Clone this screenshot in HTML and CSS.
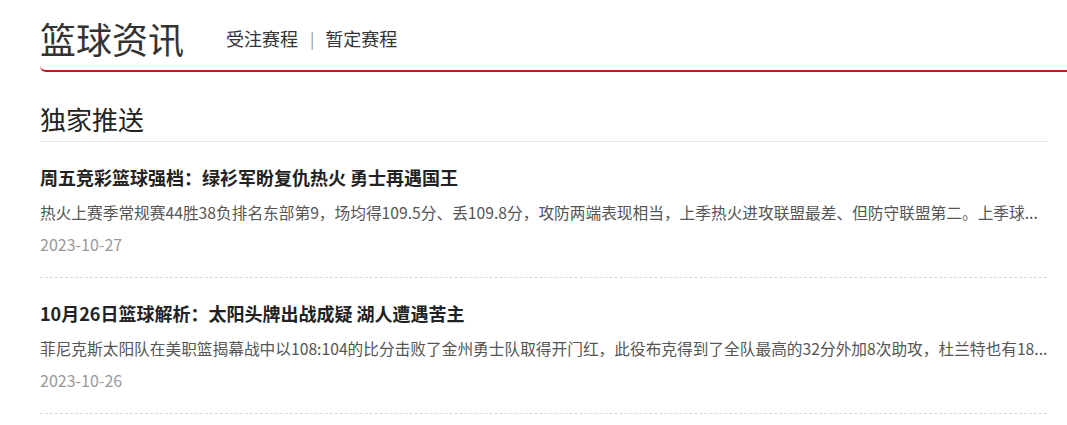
FILE: index.html
```html
<!DOCTYPE html>
<html lang="zh-CN">
<head>
<meta charset="utf-8">
<title>篮球资讯</title>
<link rel="stylesheet" href="styles.css">
</head>
<body>
<div class="page">
  <header class="top">
    <h1 class="brand">篮球资讯</h1>
    <nav class="nav">
      <a class="nav-link">受注赛程</a>
      <span class="sep">|</span>
      <a class="nav-link">暂定赛程</a>
    </nav>
  </header>
  <main class="content">
    <h2 class="section-title">独家推送</h2>
    <ul class="list">
      <li class="item">
        <h3 class="item-title">周五竞彩篮球强档：绿衫军盼复仇热火 勇士再遇国王</h3>
        <p class="item-summary">热火上赛季常规赛44胜38负排名东部第9，场均得109.5分、丢109.8分，攻防两端表现相当，上季热火进攻联盟最差、但防守联盟第二。上季球...</p>
        <p class="item-date">2023-10-27</p>
      </li>
      <li class="item">
        <h3 class="item-title">10月26日篮球解析：太阳头牌出战成疑 湖人遭遇苦主</h3>
        <p class="item-summary">菲尼克斯太阳队在美职篮揭幕战中以108:104的比分击败了金州勇士队取得开门红，此役布克得到了全队最高的32分外加8次助攻，杜兰特也有18...</p>
        <p class="item-date">2023-10-26</p>
      </li>
    </ul>
  </main>
</div>
</body>
</html>
```
FILE: styles.css
```css
* { box-sizing: border-box; }
html, body {
  margin: 0;
  padding: 0;
  background: #fff;
}
body {
  font-family: "Microsoft YaHei", "Noto Sans CJK SC", "Noto Sans", sans-serif;
  color: #333;
}
.page {
  width: 1067px;
  overflow: hidden;
}
.top {
  display: flex;
  align-items: center;
  margin-left: 40px;
  padding-top: 13px;
  padding-bottom: 7px;
  border-bottom: 2px solid #c8161d;
  border-bottom-left-radius: 6px;
}
.brand {
  margin: 0;
  font-size: 36px;
  line-height: 50px;
  font-weight: normal;
  color: #333;
}
.nav {
  display: flex;
  align-items: center;
  margin-left: 42px;
  font-size: 18px;
  line-height: 26px;
}
.nav-link {
  color: #333;
  text-decoration: none;
}
.sep {
  margin: 0 11px 0 12px;
  color: #999;
  font-size: 16px;
}
.content {
  padding: 0 20px 0 40px;
}
.section-title {
  margin: 29px 0 0;
  padding-bottom: 4px;
  font-size: 26px;
  line-height: 36px;
  font-weight: normal;
  color: #222;
  border-bottom: 1px solid #e6e6e6;
}
.list {
  list-style: none;
  margin: 0;
  padding: 0;
}
.item {
  padding: 23px 0 21px;
  border-bottom: 1px dashed #d9d9d9;
}
.item-title {
  margin: 0;
  font-size: 18px;
  line-height: 24px;
  font-weight: bold;
  color: #222;
}
.item-summary {
  margin: 12px 0 0;
  font-size: 15.7px;
  line-height: 24px;
  color: #555;
  white-space: nowrap;
  overflow: hidden;
}
.item-date {
  margin: 7px 0 0;
  font-size: 16px;
  line-height: 24px;
  color: #999;
}
```
